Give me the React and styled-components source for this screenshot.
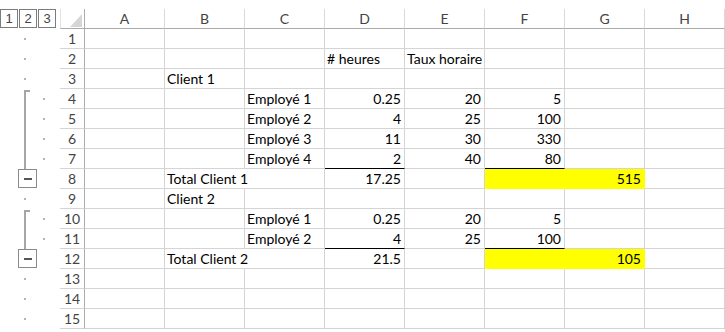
import React from 'react'
import styled, { createGlobalStyle } from 'styled-components'

const GlobalStyle = createGlobalStyle`
  html, body {
    margin: 0;
    padding: 0;
    background: #ffffff;
    overflow: hidden;
  }
  body {
    font-family: Lato, "Liberation Sans", sans-serif;
  }
`

const COLS = ['A', 'B', 'C', 'D', 'E', 'F', 'G', 'H']

// outline: dot | start | mid | end
const ROWS = [
  { n: 1, outline: 'dot' },
  { n: 2, outline: 'dot', cells: { D: { v: '# heures' }, E: { v: 'Taux horaire' } } },
  { n: 3, outline: 'dot', cells: { B: { v: 'Client 1' } } },
  { n: 4, outline: 'start', cells: { C: { v: 'Employé 1' }, D: { v: '0.25', num: true }, E: { v: '20', num: true }, F: { v: '5', num: true } } },
  { n: 5, outline: 'mid', cells: { C: { v: 'Employé 2' }, D: { v: '4', num: true }, E: { v: '25', num: true }, F: { v: '100', num: true } } },
  { n: 6, outline: 'mid', cells: { C: { v: 'Employé 3' }, D: { v: '11', num: true }, E: { v: '30', num: true }, F: { v: '330', num: true } } },
  { n: 7, outline: 'mid', cells: { C: { v: 'Employé 4' }, D: { v: '2', num: true, under: true }, E: { v: '40', num: true }, F: { v: '80', num: true, under: true } } },
  { n: 8, outline: 'end', cells: { B: { v: 'Total Client 1', span: 2 }, D: { v: '17.25', num: true }, F: { v: '515', num: true, span: 2, fill: '#ffff00' } } },
  { n: 9, outline: 'dot', cells: { B: { v: 'Client 2' } } },
  { n: 10, outline: 'start', cells: { C: { v: 'Employé 1' }, D: { v: '0.25', num: true }, E: { v: '20', num: true }, F: { v: '5', num: true } } },
  { n: 11, outline: 'mid', cells: { C: { v: 'Employé 2' }, D: { v: '4', num: true, under: true }, E: { v: '25', num: true }, F: { v: '100', num: true, under: true } } },
  { n: 12, outline: 'end', cells: { B: { v: 'Total Client 2', span: 2 }, D: { v: '21.5', num: true }, F: { v: '105', num: true, span: 2, fill: '#ffff00' } } },
  { n: 13, outline: 'dot' },
  { n: 14, outline: 'dot' },
  { n: 15, outline: 'dot' },
]

const Sheet = styled.div`
  display: grid;
  grid-template-columns: 60px 25px repeat(8, 80px);
  grid-auto-rows: 20px;
  padding-top: 9px;
  width: 725px;
`

const Outline = styled.div`
  display: flex;
  align-items: ${p => (p.$top ? 'flex-start' : 'center')};
  height: 20px;
`

const Levels = styled.div`
  display: flex;
  gap: 1px;
`

const LevelButton = styled.div`
  box-sizing: border-box;
  width: 18px;
  height: 19px;
  border: 1px solid #7c7c7c;
  font-family: "Liberation Sans", Arial, sans-serif;
  font-size: 13px;
  line-height: 17px;
  text-align: center;
  color: #444444;
`

const Bracket = styled.div`
  box-sizing: border-box;
  align-self: stretch;
  width: 6px;
  margin-left: 24px;
  margin-top: ${p => (p.$first ? '1px' : '0')};
  border-left: 2px solid #a6a6a6;
  border-top: ${p => (p.$first ? '2px solid #a6a6a6' : 'none')};
`

const Dot = styled.div`
  width: 2px;
  height: 2px;
  margin-left: ${p => p.$offset}px;
  background: #b4b4b4;
`

const MinusBox = styled.div`
  box-sizing: border-box;
  align-self: flex-start;
  display: flex;
  align-items: center;
  justify-content: center;
  width: 19px;
  height: 19px;
  margin-left: 18px;
  border: 1px solid #8a8a8a;
  background: #ffffff;
`

const MinusBar = styled.div`
  width: 8px;
  height: 2px;
  background: #555555;
`

const Corner = styled.div`
  box-sizing: border-box;
  display: flex;
  align-items: flex-end;
  justify-content: flex-end;
  padding: 0 2px 1px 0;
  border-right: 1px solid #ababab;
  border-bottom: 1px solid #ababab;
  border-left: 1px solid #e3e3e3;
`

const ColHead = styled.div`
  box-sizing: border-box;
  border-right: 1px solid #dadada;
  border-bottom: 1px solid #ababab;
  text-align: center;
  font-size: 14px;
  line-height: 19px;
  color: #444444;
`

const RowHead = styled.div`
  box-sizing: border-box;
  border-right: 1px solid #ababab;
  border-bottom: 1px solid #d4d4d4;
  text-align: center;
  font-size: 14px;
  line-height: 19px;
  color: #444444;
`

const Cell = styled.div`
  box-sizing: border-box;
  grid-column: span ${p => p.$span || 1};
  padding: 0 3px 0 2px;
  border-right: 1px solid ${p => p.$fill || '#d4d4d4'};
  border-bottom: 1px solid ${p => (p.$under ? '#000000' : p.$fill || '#d4d4d4')};
  background: ${p => p.$fill || 'transparent'};
  text-align: ${p => (p.$num ? 'right' : 'left')};
  font-size: 14px;
  line-height: 19px;
  color: #000000;
  white-space: nowrap;
  overflow: hidden;
`

const OutlineMark = ({ type }) => {
  if (type === 'start' || type === 'mid') {
    return (
      <Outline>
        <Bracket $first={type === 'start'} />
        <Dot $offset={13} />
      </Outline>
    )
  }
  if (type === 'end') {
    return (
      <Outline>
        <MinusBox>
          <MinusBar />
        </MinusBox>
      </Outline>
    )
  }
  return (
    <Outline>
      <Dot $offset={24} />
    </Outline>
  )
}

const renderCells = (cells = {}) => {
  const out = []
  let skip = 0
  COLS.forEach(col => {
    if (skip > 0) {
      skip--
      return
    }
    const c = cells[col] || {}
    if (c.span) skip = c.span - 1
    out.push(
      <Cell key={col} $span={c.span} $num={c.num} $fill={c.fill} $under={c.under}>
        {c.v}
      </Cell>
    )
  })
  return out
}

export default function App() {
  return (
    <>
      <GlobalStyle />
      <Sheet>
        <Outline $top>
          <Levels>
            <LevelButton>1</LevelButton>
            <LevelButton>2</LevelButton>
            <LevelButton>3</LevelButton>
          </Levels>
        </Outline>
        <Corner>
          <svg width="12" height="13" viewBox="0 0 12 13">
            <polygon points="12,0 12,13 0,13" fill="#d6d6d6" />
          </svg>
        </Corner>
        {COLS.map(c => (
          <ColHead key={c}>{c}</ColHead>
        ))}

        {ROWS.map(r => (
          <React.Fragment key={r.n}>
            <OutlineMark type={r.outline} />
            <RowHead>{r.n}</RowHead>
            {renderCells(r.cells)}
          </React.Fragment>
        ))}
      </Sheet>
    </>
  )
}
